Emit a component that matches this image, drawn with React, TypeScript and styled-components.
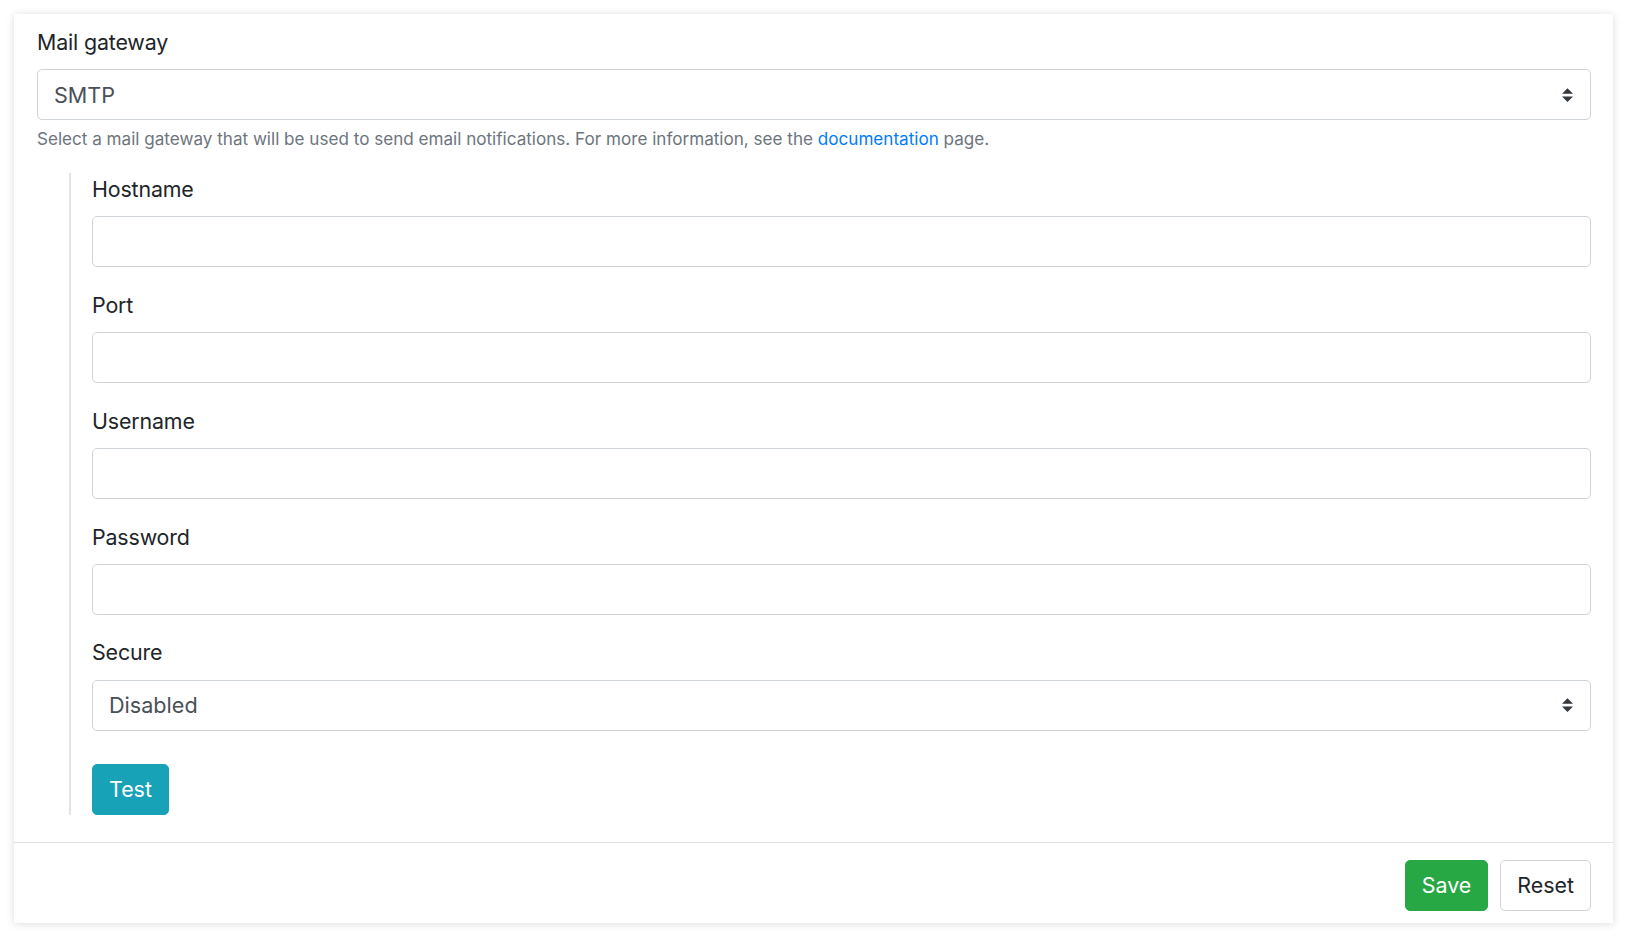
import React from 'react';
import styled, { createGlobalStyle } from 'styled-components';

const GlobalStyle = createGlobalStyle`
  html, body {
    margin: 0;
    padding: 0;
    background: #ffffff;
  }
  body {
    font-family: Inter, "Noto Sans", "Liberation Sans", sans-serif;
    color: #212529;
    -webkit-font-smoothing: antialiased;
  }
  * {
    box-sizing: border-box;
  }
`;

const Page = styled.div`
  padding: 14px 15px 15px 14px;
`;

const Card = styled.div`
  background: #ffffff;
  box-shadow: 0 1px 8px rgba(0, 0, 0, 0.14);
  height: 909px;
  display: flex;
  flex-direction: column;
`;

const CardBody = styled.div`
  padding: 12px 22px 26px 23px;
`;

const FormGroup = styled.div<{ $mb?: number }>`
  margin-bottom: ${p => (p.$mb !== undefined ? p.$mb : 21.6)}px;
`;

const Label = styled.label`
  display: block;
  font-size: 21.4px;
  letter-spacing: -0.15px;
  line-height: 32.4px;
  margin-bottom: 10.8px;
  color: #212529;
`;

const Input = styled.input`
  display: block;
  width: 100%;
  height: 51px;
  padding: 0 16px;
  font-family: inherit;
  font-size: 21.6px;
  color: #495057;
  background: #ffffff;
  border: 1px solid #ced4da;
  border-radius: 5px;
  outline: none;
`;

const SelectBox = styled.div`
  display: flex;
  align-items: center;
  justify-content: space-between;
  height: 51px;
  padding: 0 17px 0 16px;
  font-size: 21.6px;
  color: #495057;
  background: #ffffff;
  border: 1px solid #ced4da;
  border-radius: 5px;
`;

const Help = styled.div`
  margin-top: 5.4px;
  font-size: 17.1px;
  line-height: 26px;
  color: #6c757d;
`;

const Link = styled.a`
  color: #007bff;
  text-decoration: none;
`;

const Nested = styled.div`
  margin-left: 32px;
  border-left: 2px solid #e1e4e8;
  padding-left: 21px;
`;

const Button = styled.button<{ $variant: 'info' | 'success' | 'light' }>`
  height: 51px;
  padding: 0 16px;
  font-family: inherit;
  font-size: 21.4px;
  line-height: 32.4px;
  border-radius: 5px;
  cursor: pointer;
  color: ${p => (p.$variant === 'light' ? '#212529' : '#ffffff')};
  background: ${p =>
    p.$variant === 'info' ? '#17a2b8' : p.$variant === 'success' ? '#28a745' : '#ffffff'};
  border: 1px solid
    ${p =>
      p.$variant === 'info' ? '#17a2b8' : p.$variant === 'success' ? '#28a745' : '#ced4da'};
`;

const Footer = styled.div`
  margin-top: auto;
  border-top: 1px solid #dee2e6;
  padding: 17px 22px 12px;
  display: flex;
  justify-content: flex-end;
  gap: 12px;
`;

const Caret = () => (
  <svg width="11" height="14" viewBox="0 0 4 5" aria-hidden="true">
    <path d="M2 0L0 2h4zm0 5L0 3h4z" fill="#343a40" />
  </svg>
);

const Select: React.FC<{ value: string }> = ({ value }) => (
  <SelectBox>
    <span>{value}</span>
    <Caret />
  </SelectBox>
);

const fields = ['Hostname', 'Port', 'Username', 'Password'];

const App: React.FC = () => {
  return (
    <Page>
      <GlobalStyle />
      <Card>
        <CardBody>
          <FormGroup>
            <Label>Mail gateway</Label>
            <Select value="SMTP" />
            <Help>
              Select a mail gateway that will be used to send email notifications. For more
              information, see the <Link href="#">documentation</Link> page.
            </Help>
          </FormGroup>

          <Nested>
            {fields.map(name => (
              <FormGroup key={name}>
                <Label>{name}</Label>
                <Input type={name === 'Password' ? 'password' : 'text'} />
              </FormGroup>
            ))}
            <FormGroup $mb={33}>
              <Label>Secure</Label>
              <Select value="Disabled" />
            </FormGroup>
            <Button $variant="info">Test</Button>
          </Nested>
        </CardBody>

        <Footer>
          <Button $variant="success">Save</Button>
          <Button $variant="light">Reset</Button>
        </Footer>
      </Card>
    </Page>
  );
};

export default App;
